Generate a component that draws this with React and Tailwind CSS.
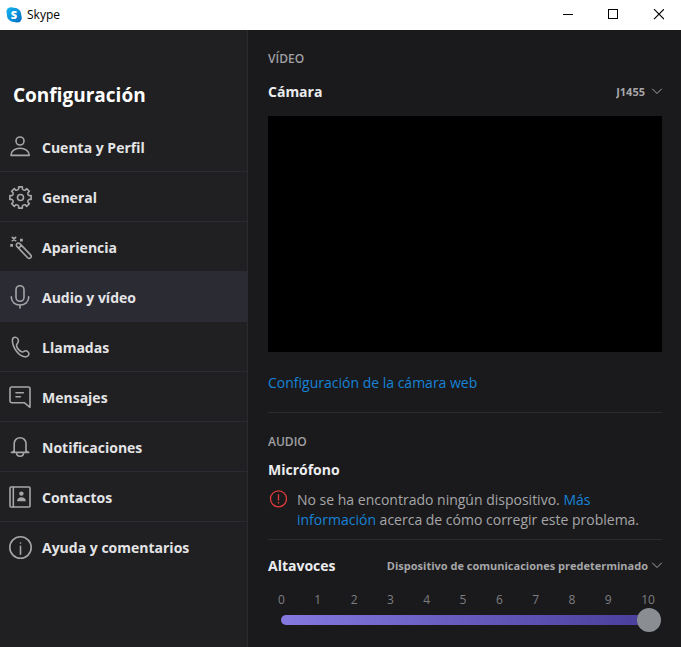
import React, { useState } from "react";

const polar = (radius, degrees) => {
  const a = (degrees * Math.PI) / 180;
  return `${(12.5 + radius * Math.sin(a)).toFixed(2)} ${(13.5 - radius * Math.cos(a)).toFixed(2)}`;
};

const gearPath =
  [0, 45, 90, 135, 180, 225, 270, 315]
    .map(
      (a, i) =>
        `${i === 0 ? "M" : "L"}${polar(8.8, a - 12)} L${polar(10.8, a - 10)} L${polar(10.8, a + 10)} L${polar(8.8, a + 12)} Q${polar(7.4, a + 22.5)} ${polar(8.8, a + 33)}`
    )
    .join(" ") + "Z";

function Icon({ children }) {
  return (
    <svg
      viewBox="0 0 25 25"
      className="h-[25px] w-[25px] shrink-0 overflow-visible text-[#a6a6a8]"
      fill="none"
      stroke="currentColor"
      strokeWidth="1.6"
      strokeLinecap="round"
      strokeLinejoin="round"
      aria-hidden="true"
    >
      {children}
    </svg>
  );
}

const items = [
  {
    label: "Cuenta y Perfil",
    icon: (
      <>
        <circle cx="12" cy="7" r="4" />
        <path d="M3 21.4C3 17 7 14.3 12 14.3S21.2 17 21.2 21.4Z" />
      </>
    ),
  },
  {
    label: "General",
    icon: (
      <>
        <path d={gearPath} />
        <circle cx="12.5" cy="13.5" r="3" />
      </>
    ),
  },
  {
    label: "Apariencia",
    icon: (
      <>
        <path d="M8.9 12.4A2 2 0 0 1 11.8 9.6L22.6 20.9A2 2 0 0 1 19.7 23.8ZM10.6 14.1L13.4 11.4" />
        <path d="M4.4 3.4L7.6 6.6M7.6 3.4L4.4 6.6" strokeWidth="1.8" />
        <path d="M12 4.8h2.8v2.8h-2.8zM2.2 10h2.8v2.8H2.2z" fill="currentColor" stroke="none" />
      </>
    ),
  },
  {
    label: "Audio y vídeo",
    icon: (
      <>
        <rect x="8" y="1.7" width="8" height="15.6" rx="4" />
        <path d="M3.3 12.8C3.3 18 7 21 12 21S20.7 18 20.7 12.8M12 21V24" />
      </>
    ),
  },
  {
    label: "Llamadas",
    icon: (
      <path d="M4.4 6.2C4.4 4.3 5.7 3.2 7.2 3.2C9 3.2 10.4 5.2 10.4 7.1C10.4 9 8.5 9.7 8.5 11.4C8.5 13.8 12.2 18 14.4 18C15.9 18 16.2 16.8 17.6 16.8C19.2 16.8 20.9 18.4 20.9 19.9C20.9 21.8 18.9 23 17 22.8C10.6 22 4.4 13.4 4.4 6.2Z" />
    ),
  },
  {
    label: "Mensajes",
    icon: (
      <>
        <path d="M3.6 3H20.4A1.6 1.6 0 0 1 22 4.6V23.3L16.2 18.7H3.6A1.6 1.6 0 0 1 2 17.1V4.6A1.6 1.6 0 0 1 3.6 3Z" />
        <path d="M8 8.7H15.4M8 12.7H12.4" />
      </>
    ),
  },
  {
    label: "Notificaciones",
    icon: (
      <>
        <path d="M3.4 18.4H20.8M6.2 17.6V9.6A5.9 5.9 0 0 1 18 9.6V17.6M6.2 16.6L4.6 18.4M18 16.6L19.6 18.4" />
        <path d="M8.6 18.8C8.6 21 10.2 22.2 12.1 22.2S15.6 21 15.6 18.8" />
      </>
    ),
  },
  {
    label: "Contactos",
    icon: (
      <>
        <rect x="2" y="3" width="20" height="20" rx="1" />
        <path d="M5.3 3V23" />
        <circle cx="13.4" cy="9.6" r="2.2" fill="currentColor" stroke="none" />
        <path d="M9 17.2C9 14.4 11 13.2 13.4 13.2S17.8 14.4 17.8 17.2Z" fill="currentColor" stroke="none" />
      </>
    ),
  },
  {
    label: "Ayuda y comentarios",
    icon: (
      <>
        <circle cx="12.5" cy="13.5" r="10.7" />
        <path d="M12.5 12.3V20.2M12.5 9V9.1" />
      </>
    ),
  },
];

function TitleBar() {
  const button = "flex h-[29px] w-[45px] items-center justify-center text-black";
  return (
    <header className="flex h-[30px] items-start bg-white pl-1.5">
      <div className="flex h-full flex-1 items-center gap-[5px]">
        <svg viewBox="0 0 16 16" className="h-4 w-4" aria-hidden="true">
          <defs>
            <linearGradient id="cloud" x1="0" y1="0" x2="1" y2="1">
              <stop offset="0" stopColor="#12b2ee" />
              <stop offset="1" stopColor="#0473c4" />
            </linearGradient>
          </defs>
          <circle cx="5.2" cy="5" r="4.8" fill="#12aeea" />
          <circle cx="11" cy="10.8" r="4.8" fill="#0473c4" />
          <circle cx="8.1" cy="7.9" r="7.2" fill="url(#cloud)" />
          <text x="8" y="12" textAnchor="middle" fontSize="11" fontWeight="800" fill="#fff" fontFamily="Open Sans, sans-serif">
            S
          </text>
        </svg>
        <span className="text-xs text-black">Skype</span>
      </div>
      <button type="button" aria-label="Minimizar" className={button}>
        <svg viewBox="0 0 11 11" className="h-[11px] w-[11px]" stroke="currentColor" shapeRendering="crispEdges">
          <path d="M0 5.5H10" />
        </svg>
      </button>
      <button type="button" aria-label="Maximizar" className={button}>
        <svg viewBox="0 0 11 11" className="h-[11px] w-[11px]" fill="none" stroke="currentColor" shapeRendering="crispEdges">
          <path d="M.5 .5H9.5V9.5H.5Z" />
        </svg>
      </button>
      <button type="button" aria-label="Cerrar" className={button}>
        <svg viewBox="0 0 11 11" className="h-[11px] w-[11px]" stroke="currentColor" strokeWidth="1.2">
          <path d="M1 .2L11 10.2M11 .2L1 10.2" />
        </svg>
      </button>
    </header>
  );
}

function DeviceSelect({ id, value, gap }) {
  return (
    <div className={`flex items-center ${gap}`}>
      <select
        id={id}
        className="field-sizing-content h-6 appearance-none bg-transparent text-right text-[11px] font-bold text-[#a6a6a8] outline-none"
      >
        <option>{value}</option>
      </select>
      <svg viewBox="0 0 10 6" className="h-1.5 w-2.5 overflow-visible" fill="none" stroke="#a6a6a8" aria-hidden="true">
        <path d="M.3 -.2L5 4.5L9.7 -.2" />
      </svg>
    </div>
  );
}

export default function App() {
  const [active, setActive] = useState("Audio y vídeo");
  const [volume, setVolume] = useState(10);
  const section = "text-xs leading-5 font-semibold text-[#a0a0a2]";
  const label = "text-sm font-bold text-[#ececee]";

  return (
    <div className="flex min-h-screen flex-col bg-[#1a1a1c] font-['Open_Sans','Noto_Sans',sans-serif]">
      <TitleBar />
      <div className="flex flex-1">
        <aside className="w-[248px] shrink-0 border-r border-[#2a2a31] bg-[#202022]">
          <h1 className="pt-[50px] pb-3 pl-[13px] text-[19px] leading-[30px] font-bold text-white">Configuración</h1>
          <nav>
            {items.map((item, i) => (
              <button
                key={item.label}
                type="button"
                onClick={() => setActive(item.label)}
                aria-current={item.label === active ? "page" : undefined}
                className={`flex h-[50px] w-full items-center gap-[9px] border-b pl-2 text-left text-sm font-bold text-[#e4e4e6] ${
                  i === items.length - 1 ? "border-transparent" : "border-[#2b2b34]"
                } ${item.label === active ? "bg-[#2b2b34]" : ""}`}
              >
                <Icon>{item.icon}</Icon>
                <span className="pt-0.5">{item.label}</span>
              </button>
            ))}
          </nav>
        </aside>

        <main className="min-w-0 flex-1 pt-[19px] pr-[19px] pl-5">
          <h2 className={section}>VÍDEO</h2>
          <div className="mt-[11px] flex h-6 items-center justify-between">
            <label htmlFor="camera" className={label}>Cámara</label>
            <DeviceSelect id="camera" value="J1455" gap="gap-[7px]" />
          </div>
          <div className="mt-3 h-[236px] bg-black" />
          <a href="#webcam" className="mt-[21px] block text-sm leading-5 text-[#1683d8]">
            Configuración de la cámara web
          </a>

          <h2 className={`mt-[19px] border-t border-[#2b2b31] pt-[19px] ${section}`}>AUDIO</h2>
          <h3 className={`mt-2 leading-5 ${label}`}>Micrófono</h3>
          <div className="mt-2.5 flex gap-2.5 pb-[9px]">
            <svg viewBox="0 0 19 19" className="h-[19px] w-[19px] shrink-0" fill="none" stroke="#e03c3a" strokeWidth="1.3" aria-hidden="true">
              <circle cx="10.5" cy="8.8" r="8" />
              <path d="M10.5 4.2V10.4M10.5 12V13.4" />
            </svg>
            <p className="text-sm leading-5 text-[#a6a6a8]">
              No se ha encontrado ningún dispositivo.{" "}
              <a href="#info" className="text-[#1683d8]">Más información</a> acerca de cómo corregir este problema.
            </p>
          </div>

          <div className="border-t border-[#2b2b31] pt-3.5">
            <div className="flex h-6 items-center justify-between">
              <label htmlFor="speaker" className={label}>Altavoces</label>
              <DeviceSelect id="speaker" value="Dispositivo de comunicaciones predeterminado" gap="gap-1" />
            </div>
            <div className="mt-3.5 mr-[7px] ml-2.5 flex h-4 justify-between text-xs text-[#7e7e82]">
              {[0, 1, 2, 3, 4, 5, 6, 7, 8, 9, 10].map((n) => (
                <span key={n}>{n}</span>
              ))}
            </div>
            <div className="mr-px ml-[13px] flex">
              <input
                type="range"
                min="0"
                max="10"
                value={volume}
                onChange={(e) => setVolume(Number(e.target.value))}
                aria-label="Volumen de los altavoces"
                className="h-6 w-full appearance-none bg-transparent [&::-webkit-slider-runnable-track]:h-2.5 [&::-webkit-slider-runnable-track]:rounded-full [&::-webkit-slider-runnable-track]:bg-linear-to-r [&::-webkit-slider-runnable-track]:from-[#8579e0] [&::-webkit-slider-runnable-track]:to-[#483c98] [&::-webkit-slider-thumb]:-mt-[7px] [&::-webkit-slider-thumb]:h-6 [&::-webkit-slider-thumb]:w-6 [&::-webkit-slider-thumb]:appearance-none [&::-webkit-slider-thumb]:rounded-full [&::-webkit-slider-thumb]:bg-[#8a8d91]"
              />
            </div>
          </div>
        </main>
      </div>
    </div>
  );
}
